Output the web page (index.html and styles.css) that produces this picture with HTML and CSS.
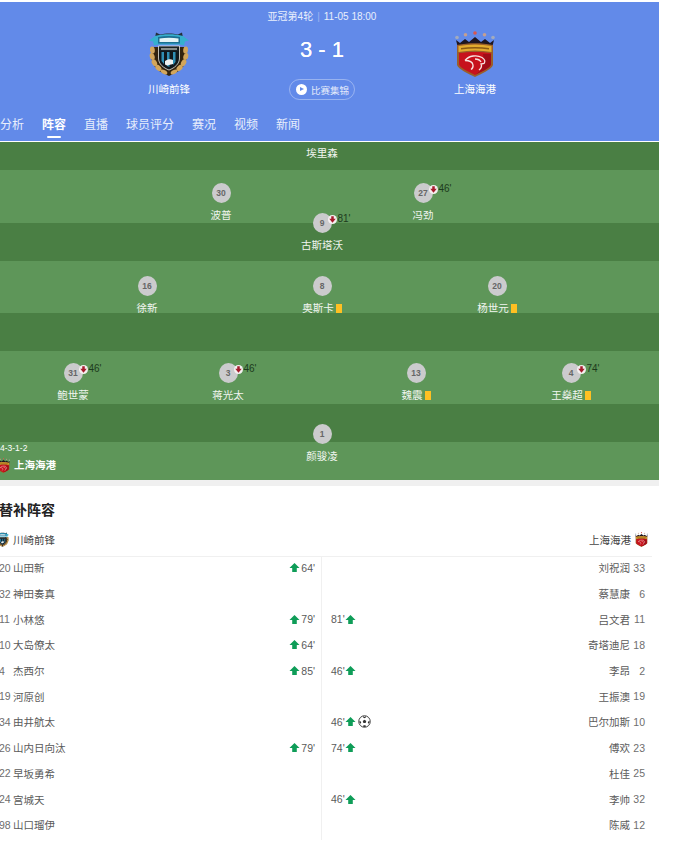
FILE: index.html
```html
<!DOCTYPE html>
<html lang="zh-CN">
<head>
  <meta charset="UTF-8">
  <meta name="viewport" content="width=device-width, initial-scale=1.0">
  <title>川崎前锋 vs 上海海港</title>
  <link rel="stylesheet" href="styles.css">
</head>
<body>

  <svg class="defs" width="0" height="0">
    <defs>
      <symbol id="crest-kawasaki" viewBox="0 0 40 46">
        <path d="M3 16C0 27 4 38 14 42l6 3 6-3c10-4 14-15 11-26z" fill="#33240f"/>
        <g fill="#d2a65c">
          <ellipse cx="3.400" cy="19" rx="2.400" ry="3.600" transform="rotate(-6 3.400 19)"/>
          <ellipse cx="3.200" cy="25.500" rx="2.400" ry="3.600" transform="rotate(-16 3.200 25.500)"/>
          <ellipse cx="5.400" cy="31.800" rx="2.400" ry="3.600" transform="rotate(-30 5.400 31.800)"/>
          <ellipse cx="9.400" cy="37" rx="2.400" ry="3.600" transform="rotate(-46 9.400 37)"/>
          <ellipse cx="15" cy="41" rx="2" ry="3.600" transform="rotate(-62 15 41)"/>
          <ellipse cx="36.600" cy="19" rx="2.400" ry="3.600" transform="rotate(6 36.600 19)"/>
          <ellipse cx="36.800" cy="25.500" rx="2.400" ry="3.600" transform="rotate(16 36.800 25.500)"/>
          <ellipse cx="34.600" cy="31.800" rx="2.400" ry="3.600" transform="rotate(30 34.600 31.800)"/>
          <ellipse cx="30.600" cy="37" rx="2.400" ry="3.600" transform="rotate(46 30.600 37)"/>
          <ellipse cx="25" cy="41" rx="2" ry="3.600" transform="rotate(62 25 41)"/>
        </g>
        <path d="M9.500 15h21v12c0 6-5 10-10.500 12C14.500 37 9.500 33 9.500 27z" fill="#10181d" stroke="#e8e8e0" stroke-width=".8"/>
        <path d="M12.500 21h2.500v12l-2.500-3zM18 21h2.500v15l-2.500-1zM24 21h2.500v10l-2.500 3z" fill="#2f8fb5"/>
        <path d="M16 30c3-2 6-2 8-1v4l-6 1.500-2-1z" fill="#eef2f2"/>
        <path d="M10.500 16h19v4h-19z" fill="#1a2327"/>
        <path d="M12 17.300h16v1.400H12z" fill="#b7bdb8"/>
        <path d="M7 1.500l4 2c5-1.500 13-1.500 18 0l4-2 1 5.500H6z" fill="#24303a"/>
        <path d="M0 9.500l6-4.500c8-2.500 20-2.500 28 0l6 4.500-4 1-1 4-4-1H9l-4 1-1-4z" fill="#36afcf"/>
        <path d="M9 6c7-1.500 15-1.500 22 0v6.500H9z" fill="#1c6f92"/>
        <path d="M10.500 7.500c6-1 13-1 19 0v3.500h-19z" fill="#e4f4f6"/>
      </symbol>
      <symbol id="crest-shanghai" viewBox="0 0 40 46">
        <circle cx="2" cy="6.500" r="1.800" fill="#a3abbd"/>
        <circle cx="10.500" cy="3.800" r="1.800" fill="#c59f90"/>
        <circle cx="20" cy="2" r="1.800" fill="#d8574f"/>
        <circle cx="29.500" cy="3.800" r="1.800" fill="#c59f90"/>
        <circle cx="38" cy="6.500" r="1.800" fill="#a3abbd"/>
        <path d="M1 9l4 3 5-4 4 3 6-5 6 5 4-3 5 4 4-3-2 8H3z" fill="#1e1620"/>
        <path d="M2 14c12-2.500 24-2.500 36 0v20c-1 4-12 9-18 12-6-3-17-8-18-12z" fill="#9a5f2a"/>
        <path d="M3.500 15c11-2 22-2 33 0v6c-11-2-22-2-33 0z" fill="#e2ac2e"/>
        <path d="M6 17c9-1.300 19-1.300 28 0v1.500c-9-1.300-19-1.300-28 0z" fill="#8a5a14"/>
        <path d="M4 22c10-1.500 22-1.500 32 0v11.500c-1 3.500-10 7.500-16 10.500-6-3-15-7-16-10.500z" fill="#c7121c"/>
        <path d="M28 23l8 0v10.500c-1 3.500-10 7.500-16 10.500 8-5 10-12 8-21z" fill="#a00d17"/>
        <path d="M10 29.500c4-5 12-6 17-3 3 2 3.500 4 2 6l-3 .5c1 2 .5 4-2 6M10 29.500c4 0 7.500 1.500 8 4.500.3 2-.5 3.500-2 4.500M20 28c3 0 5 1 6 3" fill="none" stroke="#f8e4e0" stroke-width="1.300"/>
      </symbol>
      <symbol id="icon-up" viewBox="0 0 12 12">
        <path d="M6 1l5.500 5.500H8.500V11h-5V6.500H.5z" fill="#0f9d58"/>
      </symbol>
      <symbol id="icon-off" viewBox="0 0 10 10">
        <circle cx="5" cy="5" r="5" fill="#f4f0f0"/>
        <path d="M3.600 1.500h2.800v2.800h2.200L5 8.600 1.400 4.300h2.200z" fill="#a51c2c"/>
      </symbol>
      <symbol id="icon-ball" viewBox="0 0 14 14">
        <circle cx="7" cy="7" r="6.200" fill="#fff" stroke="#333" stroke-width="1"/>
        <path d="M7 5l1.900 1.400-.7 2.200H5.800l-.7-2.200z" fill="#333"/>
        <path d="M5.500 1.300L7 2.100l1.500-.8.2 1.200L7 3.400l-1.700-.9zM1.500 6.500l1.300.1.700 1.700-.7 1.200-1.200-1.300zM12.500 6.500l-1.300.1-.7 1.700.7 1.200 1.200-1.300zM5.300 12.400l.7-1.300h2l.7 1.300-1.700.4z" fill="#333"/>
      </symbol>
    </defs>
  </svg>

  <!-- 比赛头部 -->
  <header class="match-head">
    <p class="match-meta">亚冠第4轮<span class="meta-sep">|</span>11-05 18:00</p>
    <div class="match-row">
      <div class="team">
        <svg class="team-crest"><use href="#crest-kawasaki"/></svg>
        <span class="team-name">川崎前锋</span>
      </div>
      <div class="match-center">
        <div class="score">3 - 1</div>
        <div class="replay-btn">
          <span class="replay-icon"></span>
          比赛集锦
        </div>
      </div>
      <div class="team">
        <svg class="team-crest"><use href="#crest-shanghai"/></svg>
        <span class="team-name">上海海港</span>
      </div>
    </div>
    <nav class="tabs">
      <span class="tab">分析</span>
      <span class="tab active">阵容</span>
      <span class="tab">直播</span>
      <span class="tab">球员评分</span>
      <span class="tab">赛况</span>
      <span class="tab">视频</span>
      <span class="tab">新闻</span>
    </nav>
  </header>

  <!-- 球场 -->
  <section class="pitch">
    <div class="stripe dark h-28"></div>
    <div class="stripe light h-53"></div>
    <div class="stripe dark h-38"></div>
    <div class="stripe light h-52"></div>
    <div class="stripe dark h-38"></div>
    <div class="stripe light h-53"></div>
    <div class="stripe dark h-38"></div>
    <div class="stripe light h-38"></div>

    <div class="player pos-elkeson"><span class="player-name">埃里森</span></div>

    <div class="player pos-30">
      <span class="shirt">30</span>
      <span class="player-name">波普</span>
    </div>
    <div class="player pos-27">
      <span class="shirt">27<span class="off"><svg class="off-icon"><use href="#icon-off"/></svg>46'</span></span>
      <span class="player-name">冯劲</span>
    </div>
    <div class="player pos-9">
      <span class="shirt">9<span class="off"><svg class="off-icon"><use href="#icon-off"/></svg>81'</span></span>
      <span class="player-name">古斯塔沃</span>
    </div>
    <div class="player pos-16">
      <span class="shirt">16</span>
      <span class="player-name">徐新</span>
    </div>
    <div class="player pos-8">
      <span class="shirt">8</span>
      <span class="player-name">奥斯卡<i class="card"></i></span>
    </div>
    <div class="player pos-20">
      <span class="shirt">20</span>
      <span class="player-name">杨世元<i class="card"></i></span>
    </div>
    <div class="player pos-31">
      <span class="shirt">31<span class="off"><svg class="off-icon"><use href="#icon-off"/></svg>46'</span></span>
      <span class="player-name">鲍世蒙</span>
    </div>
    <div class="player pos-3">
      <span class="shirt">3<span class="off"><svg class="off-icon"><use href="#icon-off"/></svg>46'</span></span>
      <span class="player-name">蒋光太</span>
    </div>
    <div class="player pos-13">
      <span class="shirt">13</span>
      <span class="player-name">魏震<i class="card"></i></span>
    </div>
    <div class="player pos-4">
      <span class="shirt">4<span class="off"><svg class="off-icon"><use href="#icon-off"/></svg>74'</span></span>
      <span class="player-name">王燊超<i class="card"></i></span>
    </div>
    <div class="player pos-1">
      <span class="shirt">1</span>
      <span class="player-name">颜骏凌</span>
    </div>

    <div class="formation">
      <p class="formation-num">4-3-1-2</p>
      <p class="formation-team"><svg class="mini-crest"><use href="#crest-shanghai"/></svg>上海海港</p>
    </div>
  </section>

  <!-- 替补阵容 -->
  <section class="subs">
    <h2 class="subs-title">替补阵容</h2>
    <div class="subs-teams">
      <span class="subs-team"><svg class="mini-crest"><use href="#crest-kawasaki"/></svg>川崎前锋</span>
      <span class="subs-team"><span>上海海港</span><svg class="mini-crest"><use href="#crest-shanghai"/></svg></span>
    </div>
    <div class="subs-grid">
      <ul class="subs-list left">
        <li><span class="num">20</span><span class="name">山田新</span><span class="event"><svg class="up"><use href="#icon-up"/></svg>64'</span></li>
        <li><span class="num">32</span><span class="name">神田奏真</span></li>
        <li><span class="num">11</span><span class="name">小林悠</span><span class="event"><svg class="up"><use href="#icon-up"/></svg>79'</span></li>
        <li><span class="num">10</span><span class="name">大岛僚太</span><span class="event"><svg class="up"><use href="#icon-up"/></svg>64'</span></li>
        <li><span class="num">4</span><span class="name">杰西尔</span><span class="event"><svg class="up"><use href="#icon-up"/></svg>85'</span></li>
        <li><span class="num">19</span><span class="name">河原创</span></li>
        <li><span class="num">34</span><span class="name">由井航太</span></li>
        <li><span class="num">26</span><span class="name">山内日向汰</span><span class="event"><svg class="up"><use href="#icon-up"/></svg>79'</span></li>
        <li><span class="num">22</span><span class="name">早坂勇希</span></li>
        <li><span class="num">24</span><span class="name">宫城天</span></li>
        <li><span class="num">98</span><span class="name">山口瑠伊</span></li>
      </ul>
      <ul class="subs-list right">
        <li><span class="name">刘祝润</span><span class="num">33</span></li>
        <li><span class="name">蔡慧康</span><span class="num">6</span></li>
        <li><span class="event">81'<svg class="up"><use href="#icon-up"/></svg></span><span class="name">吕文君</span><span class="num">11</span></li>
        <li><span class="name">奇塔迪尼</span><span class="num">18</span></li>
        <li><span class="event">46'<svg class="up"><use href="#icon-up"/></svg></span><span class="name">李昂</span><span class="num">2</span></li>
        <li><span class="name">王振澳</span><span class="num">19</span></li>
        <li><span class="event">46'<svg class="up"><use href="#icon-up"/></svg><svg class="ball"><use href="#icon-ball"/></svg></span><span class="name">巴尔加斯</span><span class="num">10</span></li>
        <li><span class="event">74'<svg class="up"><use href="#icon-up"/></svg></span><span class="name">傅欢</span><span class="num">23</span></li>
        <li><span class="name">杜佳</span><span class="num">25</span></li>
        <li><span class="event">46'<svg class="up"><use href="#icon-up"/></svg></span><span class="name">李帅</span><span class="num">32</span></li>
        <li><span class="name">陈威</span><span class="num">12</span></li>
      </ul>
    </div>
  </section>

</body>
</html>
```

FILE: styles.css
```css
body {
  margin: 0;
  padding-top: 2px;
  width: 659px;
  height: 842px;
  overflow: hidden;
  background-color: #fff;
  font-family: "Liberation Sans", "Noto Sans CJK SC", sans-serif;
  color: #444;
}

.defs {
  position: absolute;
}

/* Cabecera */
.match-head {
  height: 139px;
  box-sizing: border-box;
  padding: 8px 15px 0 0;
  background-color: #628ae9;
  color: #fff;
}

.match-meta {
  margin: 0;
  height: 14px;
  line-height: 14px;
  font-size: 10px;
  text-align: center;
  color: #e9effc;
}

.meta-sep {
  margin: 0 4px;
  opacity: 0.4;
}

.match-row {
  display: flex;
  justify-content: center;
  height: 70px;
  margin-top: 6px;
}

.team {
  width: 106px;
  display: flex;
  flex-direction: column;
  align-items: center;
}

.team-crest {
  width: 40px;
  height: 46px;
  margin-top: 1px;
}

.team-name {
  margin-top: 5px;
  font-size: 10.5px;
  line-height: 14px;
}

.match-center {
  width: 200px;
  display: flex;
  flex-direction: column;
  align-items: center;
}

.score {
  height: 40px;
  line-height: 40px;
  font-size: 22px;
  text-shadow: 0 0 0.6px #fff;
}

.replay-btn {
  display: flex;
  align-items: center;
  gap: 4px;
  height: 21px;
  box-sizing: border-box;
  margin-top: 9px;
  padding: 0 5px 0 6px;
  border: 1px solid rgba(255, 255, 255, 0.35);
  border-radius: 11px;
  font-size: 9.5px;
  color: #e4ebfb;
}

.replay-icon {
  width: 11px;
  height: 11px;
  border-radius: 50%;
  background-color: #fff;
  position: relative;
}

.replay-icon::after {
  content: "";
  position: absolute;
  left: 4px;
  top: 3px;
  border-left: 4px solid #628ae9;
  border-top: 2.5px solid transparent;
  border-bottom: 2.5px solid transparent;
}

.tabs {
  display: flex;
  gap: 18px;
  margin-top: 15px;
  line-height: 20px;
  font-size: 12px;
  color: #e9effc;
}

.tab {
  position: relative;
  height: 24px;
}

.tab.active {
  font-weight: bold;
  color: #fff;
}

.tab.active::after {
  content: "";
  position: absolute;
  left: 5px;
  right: 5px;
  bottom: 1px;
  height: 2px;
  border-radius: 1px;
  background-color: #fff;
}

/* Campo */
.pitch {
  position: relative;
  margin-top: 1px;
  overflow: hidden;
}

.stripe.dark {
  background-color: #4a7f44;
}

.stripe.light {
  background-color: #5e9659;
}

.h-28 { height: 28px; }
.h-38 { height: 38px; }
.h-52 { height: 52px; }
.h-53 { height: 53px; }

.player {
  position: absolute;
  width: 100px;
  margin-left: -50px;
  display: flex;
  flex-direction: column;
  align-items: center;
}

.pos-elkeson { left: 322px; top: 4px; }
.pos-30 { left: 221px; top: 41px; }
.pos-27 { left: 423px; top: 41px; }
.pos-9 { left: 322px; top: 71px; }
.pos-16 { left: 147px; top: 134px; }
.pos-8 { left: 322px; top: 134px; }
.pos-20 { left: 497px; top: 134px; }
.pos-31 { left: 73px; top: 221px; }
.pos-3 { left: 228px; top: 221px; }
.pos-13 { left: 416px; top: 221px; }
.pos-4 { left: 571px; top: 221px; }
.pos-1 { left: 322px; top: 282px; }

.shirt {
  position: relative;
  width: 19px;
  height: 20px;
  line-height: 20px;
  border-radius: 50%;
  background-color: #cbcbcd;
  text-align: center;
  font-size: 8.5px;
  font-weight: bold;
  color: #666;
  margin-bottom: 5px;
}

.off {
  position: absolute;
  left: 15px;
  top: 1px;
  display: flex;
  align-items: center;
  gap: 1px;
  height: 10px;
  line-height: 10px;
  font-size: 10px;
  font-weight: normal;
  color: #1d3a1c;
  white-space: nowrap;
}

.off-icon {
  width: 9px;
  height: 9px;
}

.player-name {
  display: flex;
  align-items: center;
  height: 14px;
  line-height: 14px;
  font-size: 10.5px;
  color: #f1f5f0;
}

.card {
  width: 6px;
  height: 9px;
  margin-left: 2px;
  background-color: #ffc022;
}

.formation {
  position: absolute;
  left: 0;
  bottom: 7px;
  color: #fff;
}

.formation-num {
  margin: 0 0 3px;
  line-height: 12px;
  font-size: 8.5px;
}

.formation-team {
  display: flex;
  align-items: center;
  gap: 4px;
  margin: 0 0 0 -3px;
  line-height: 16px;
  font-size: 10.5px;
  font-weight: bold;
}

.mini-crest {
  width: 13px;
  height: 15px;
}

/* Suplentes */
.subs {
  border-top: 6px solid #f0f0f0;
}

.subs-title {
  margin: 0 0 0 -1px;
  padding-top: 14px;
  line-height: 20px;
  font-size: 14px;
  color: #222;
}

.subs-teams {
  display: flex;
  justify-content: space-between;
  align-items: center;
  height: 37px;
  width: 652px;
  box-sizing: border-box;
  padding: 3px 4px 0 0;
  border-bottom: 1px solid #f0f0f0;
  font-size: 10.5px;
}

.subs-team {
  display: flex;
  align-items: center;
  gap: 4px;
}

.subs-team:first-child .mini-crest {
  margin-left: -4px;
}

.subs-grid {
  display: flex;
  width: 652px;
}

.subs-list {
  margin: 0;
  padding: 0;
  list-style: none;
  font-size: 10.5px;
  color: #5a5a5a;
}

.subs-list .num {
  color: #6e6e6e;
}

.subs-list li {
  display: flex;
  align-items: center;
  height: 25.7px;
  box-sizing: border-box;
  padding-bottom: 4px;
}

.subs-list.left {
  width: 322px;
  box-sizing: border-box;
  padding-right: 6px;
  border-right: 1px solid #f0f0f0;
}

.subs-list.right {
  flex: 1;
  padding-left: 9px;
  padding-right: 7px;
}

.subs-list.left .num {
  width: 14px;
  margin-left: -1px;
}

.subs-list.left .event {
  margin-left: auto;
  gap: 1px;
}

.subs-list.right .name {
  margin-left: auto;
}

.subs-list.right .num {
  width: 15px;
  text-align: right;
}

.event {
  display: flex;
  align-items: center;
}

.up {
  width: 11px;
  height: 11px;
}

.ball {
  width: 13px;
  height: 13px;
  margin-left: 2px;
}
```
